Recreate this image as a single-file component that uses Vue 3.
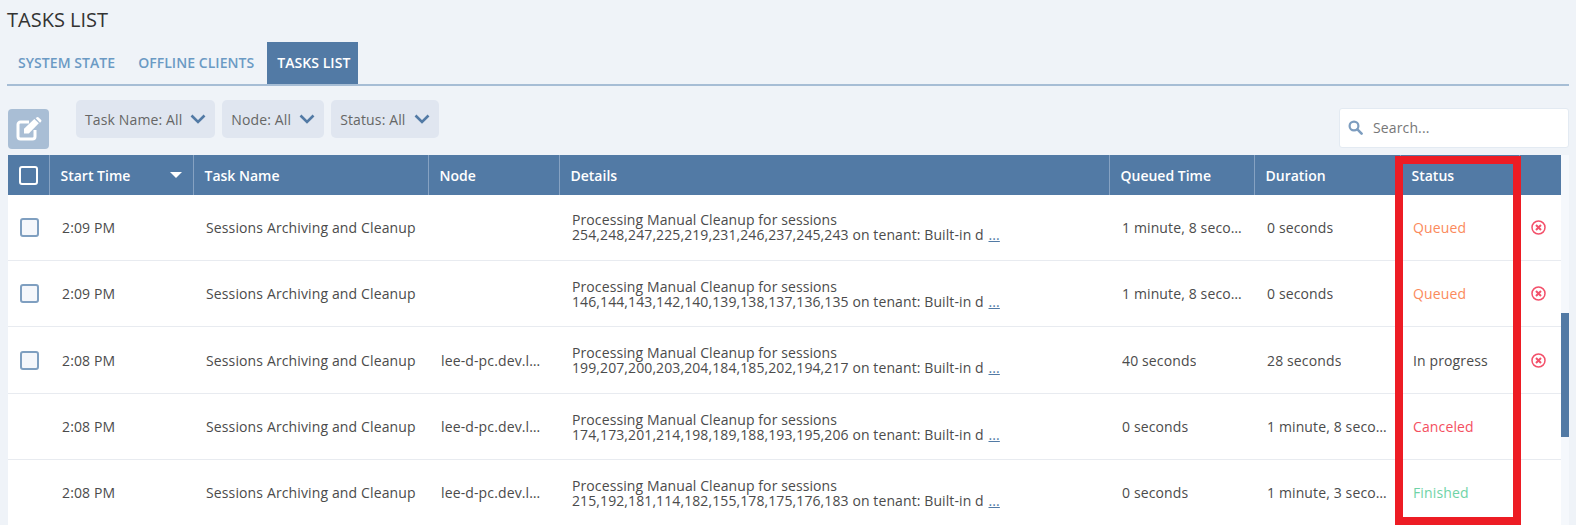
<script setup>
const rows = [
  { time: '2:09 PM', node: '', ids: '254,248,247,225,219,231,246,237,245,243', queued: '1 minute, 8 seconds', dur: '0 seconds', status: 'Queued', cls: 'queued', active: true },
  { time: '2:09 PM', node: '', ids: '146,144,143,142,140,139,138,137,136,135', queued: '1 minute, 8 seconds', dur: '0 seconds', status: 'Queued', cls: 'queued', active: true },
  { time: '2:08 PM', node: 'lee-d-pc.dev.local', ids: '199,207,200,203,204,184,185,202,194,217', queued: '40 seconds', dur: '28 seconds', status: 'In progress', cls: 'progress', active: true },
  { time: '2:08 PM', node: 'lee-d-pc.dev.local', ids: '174,173,201,214,198,189,188,193,195,206', queued: '0 seconds', dur: '1 minute, 8 seconds', status: 'Canceled', cls: 'canceled', active: false },
  { time: '2:08 PM', node: 'lee-d-pc.dev.local', ids: '215,192,181,114,182,155,178,175,176,183', queued: '0 seconds', dur: '1 minute, 3 seconds', status: 'Finished', cls: 'finished', active: false }
]
const filters = ['Task Name: All', 'Node: All', 'Status: All']
const tabs = ['SYSTEM STATE', 'OFFLINE CLIENTS', 'TASKS LIST']
</script>

<template>
  <div class="page">
    <h1 class="title">TASKS LIST</h1>
    <div class="tabs">
      <div v-for="(t, i) in tabs" :key="t" class="tab" :class="{ active: i === 2 }">{{ t }}</div>
    </div>
    <div class="toolbar">
      <button class="edit">
        <svg width="26" height="24" viewBox="0 0 26 24">
          <path d="M13 5H4.500A2.500 2.500 0 0 0 2 7.500V19.500A2.500 2.500 0 0 0 4.500 22H16.500A2.500 2.500 0 0 0 19 19.500V13" fill="none" stroke="#fff" stroke-width="3"/>
          <path d="M8 16.500V11.800L18.300 2 22.800 6.300 12.800 16.500z" fill="#fff"/>
          <path d="M19.600.9 21 .2a1.500 1.500 0 0 1 1.600.2l2.400 2.300a1.500 1.500 0 0 1 0 2L24 5.800z" fill="#fff"/>
        </svg>
      </button>
      <div class="filters">
        <div v-for="f in filters" :key="f" class="filter">
          <span>{{ f }}</span>
          <svg width="16" height="10" viewBox="0 0 16 10"><path d="M1.500 1.500 8 8l6.500-6.500" fill="none" stroke="#527aa5" stroke-width="2.600"/></svg>
        </div>
      </div>
      <div class="search">
        <svg width="15" height="15" viewBox="0 0 15 15"><circle cx="6" cy="6" r="4.400" fill="none" stroke="#7d9dbf" stroke-width="2.200"/><path d="M9.400 9.400 13.600 13.600" stroke="#7d9dbf" stroke-width="2.600" stroke-linecap="round"/></svg>
        <span>Search...</span>
      </div>
    </div>
    <div class="table-wrap">
      <div class="table">
        <div class="grid head">
          <div class="hc first"><span class="hbox"></span></div>
          <div class="hc sort"><span>Start Time</span><i class="caret"></i></div>
          <div class="hc">Task Name</div>
          <div class="hc">Node</div>
          <div class="hc">Details</div>
          <div class="hc">Queued Time</div>
          <div class="hc">Duration</div>
          <div class="hc">Status</div>
          <div class="hc last"></div>
        </div>
        <div v-for="r in rows" :key="r.ids" class="grid row">
          <div class="c first"><span v-if="r.active" class="box"></span></div>
          <div class="c"><span class="clip">{{ r.time }}</span></div>
          <div class="c"><span class="clip">Sessions Archiving and Cleanup</span></div>
          <div class="c node"><span class="clip">{{ r.node }}</span></div>
          <div class="c details">
            <div>Processing Manual Cleanup for sessions<br>{{ r.ids }} on tenant: Built-in d <a class="more">...</a></div>
          </div>
          <div class="c"><span class="clip">{{ r.queued }}</span></div>
          <div class="c"><span class="clip">{{ r.dur }}</span></div>
          <div class="c" :class="r.cls"><span class="clip">{{ r.status }}</span></div>
          <div class="c last">
            <svg v-if="r.active" width="15" height="15" viewBox="0 0 15 15"><circle cx="7.500" cy="7.500" r="6.500" fill="none" stroke="#f3506a" stroke-width="1.500"/><path d="M5 5l5 5M10 5l-5 5" stroke="#f3506a" stroke-width="2"/></svg>
          </div>
        </div>
      </div>
      <div class="track"><div class="thumb"></div></div>
    </div>
    <div class="highlight"></div>
  </div>
</template>

<style>
html, body { margin: 0; background: #eff3f8; }
</style>

<style scoped>
.page {
  position: relative;
  width: 1576px;
  height: 525px;
  overflow: hidden;
  box-sizing: border-box;
  padding: 0 7px;
  background: #eff3f8;
  font-family: "Open Sans", "Liberation Sans", sans-serif;
  font-size: 14px;
  letter-spacing: 0.13px;
  color: #4b4b4b;
}
.title {
  margin: 0;
  height: 42px;
  line-height: 40px;
  font-size: 20px;
  font-weight: 400;
  letter-spacing: 0;
  color: #333;
}
.tabs {
  display: flex;
  height: 42px;
  border-bottom: 2px solid #a6bdd5;
}
.tab {
  padding: 0 12px 0 11px;
  line-height: 42px;
  font-weight: 600;
  font-size: 14px;
  color: #6b9ac4;
  letter-spacing: 0.05px;
}
.tab.active {
  background: #527aa5;
  color: #fff;
  margin-left: 1px;
  padding: 0 8px 0 10px;
}
.toolbar {
  display: flex;
  align-items: flex-start;
  height: 69px;
  padding-left: 1px;
}
.edit {
  width: 41px;
  height: 40px;
  margin-top: 23px;
  padding: 0;
  border: none;
  border-radius: 4px;
  background: #a9bed5;
  display: flex;
  align-items: center;
  justify-content: center;
}
.filters {
  display: flex;
  gap: 7px;
  margin-top: 14px;
  margin-left: 27px;
}
.filter {
  height: 38px;
  padding: 0 9px;
  box-sizing: border-box;
  display: flex;
  align-items: center;
  gap: 8px;
  background: #e0e6f0;
  border-radius: 5px;
  color: #666;
}
.search {
  margin-left: auto;
  margin-top: 22px;
  width: 230px;
  height: 40px;
  box-sizing: border-box;
  background: #fff;
  border: 1px solid #e3eaf2;
  border-radius: 3px;
  display: flex;
  align-items: center;
  gap: 10px;
  padding: 0 0 2px 8px;
  color: #777;
}
.table-wrap {
  display: flex;
  padding-left: 1px;
}
.table { width: 1553px; }
.grid {
  display: grid;
  grid-template-columns: 41px 144px 235px 131px 550px 145px 146px 119px 42px;
}
.head {
  height: 40px;
  background: #527aa5;
  color: #fff;
  font-weight: 600;
}
.hc {
  display: flex;
  align-items: center;
  padding: 0 11px 0 10.5px;
  border-left: 1px solid #86a2c2;
  letter-spacing: 0;
}
.hc.first { border-left: none; padding: 0 0 0 11px; }
.hc.last { padding: 0; }
.hc.sort { justify-content: space-between; }
.hbox {
  width: 19px;
  height: 19px;
  box-sizing: border-box;
  border: 2px solid #fff;
  border-radius: 3px;
}
.caret {
  width: 0;
  height: 0;
  border-left: 6px solid transparent;
  border-right: 6px solid transparent;
  border-top: 6px solid #fff;
}
.row {
  height: 66px;
  box-sizing: border-box;
  background: #fff;
  border-bottom: 1px solid #e8ebf0;
}
.row:nth-child(4) { height: 67px; }
.c {
  display: flex;
  align-items: center;
  padding: 0 12px;
  min-width: 0;
  border-left: 1px solid transparent;
}
.c.first { padding: 0 0 0 12px; border-left: none; }
.c.last { padding: 0 0 0 11px; }
.c.node { padding-right: 15px; }
.clip {
  overflow: hidden;
  white-space: nowrap;
  text-overflow: ellipsis;
}
.details {
  line-height: 15px;
  white-space: nowrap;
  letter-spacing: 0.1px;
  padding: 1px 0 0 12px;
}
.row:nth-child(2) .details { padding: 0 0 1px 12px; }
.row:nth-child(4) .details { padding: 0 0 1px 12px; }
.more { color: #527aa5; text-decoration: underline; margin-left: 1px; }
.box {
  width: 19px;
  height: 19px;
  box-sizing: border-box;
  background: #f5f7fb;
  border: 2px solid #7f9fc0;
  border-radius: 3px;
}
.queued { color: #fb8a5c; }
.progress { color: #4b4b4b; }
.canceled { color: #f4505f; }
.finished { color: #6fd3a6; }
.track {
  width: 8px;
  height: 370px;
  background: #f5f8fc;
}
.thumb {
  margin-top: 158px;
  height: 124px;
  background: #527aa5;
}
.highlight {
  position: absolute;
  left: 1395px;
  top: 156px;
  width: 126px;
  height: 369px;
  box-sizing: border-box;
  border: 8px solid #ed1c24;
}
</style>
